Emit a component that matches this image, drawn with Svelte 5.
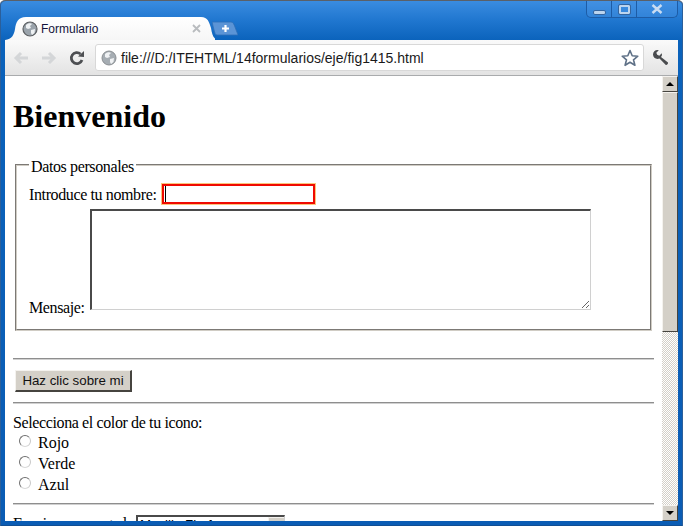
<script lang="ts">
	const radios = ['Rojo', 'Verde', 'Azul'];
</script>

<div class="window">
	<header class="tabstrip">
		<div class="tab">
			<svg class="tab-shape" width="210" height="24" viewBox="0 0 210 24">
				<defs>
					<linearGradient id="tabfill" x1="0" y1="0" x2="0" y2="1">
						<stop offset="0" stop-color="#ffffff" />
						<stop offset="1" stop-color="#f6f6f6" />
					</linearGradient>
				</defs>
				<path d="M0 24C7 23 9 19 10 13C11 6 13 1 21 1H196C203 1 204 6 206 12C207 18 208 22 212 24Z" fill="url(#tabfill)" />
			</svg>
			<svg class="globe" width="16" height="16" viewBox="0 0 16 16">
				<circle cx="8" cy="8" r="7" fill="#9aa3ab" stroke="#5c5f62" stroke-width="1.2" />
				<path d="M4 4C6 2 9 2 10 3L8 5L9 7L6 8L4 7ZM9 9L13 8L12.500 12L10 14L9 12Z" fill="#eef1f3" />
			</svg>
			<span class="tab-title">Formulario</span>
			<svg class="tab-close" width="9" height="9" viewBox="0 0 9 9">
				<path d="M1 1L8 8M8 1L1 8" stroke="#b9bcbf" stroke-width="1.800" />
			</svg>
		</div>
		<div class="newtab">
			<svg width="26" height="15" viewBox="0 0 26 15">
				<path d="M0 1H19C21 1 22 3 23 6L26 14H5C3 14 3 12 2 9Z" fill="#5b94d6" stroke="#2d6fb8" stroke-width="0.800" />
				<path d="M13.500 4V11M10 7.500H17" stroke="#ffffff" stroke-width="2.200" />
			</svg>
		</div>
		<div class="controls">
			<div class="ctl ctl-min"><span class="min-bar"></span></div>
			<div class="ctl ctl-max"><span class="max-box"></span></div>
			<div class="ctl ctl-close">
				<svg width="12" height="10" viewBox="0 0 12 10">
					<path d="M1.500 1L10.500 9M10.500 1L1.500 9" stroke="#c9dcf2" stroke-width="2.400" />
				</svg>
			</div>
		</div>
	</header>

	<nav class="toolbar">
		<svg class="tool back" width="16" height="14" viewBox="0 0 16 14">
			<path d="M15 7H4M8 2L3 7L8 12" fill="none" stroke="#d4d6d8" stroke-width="3" />
		</svg>
		<svg class="tool fwd" width="16" height="14" viewBox="0 0 16 14">
			<path d="M1 7H12M8 2L13 7L8 12" fill="none" stroke="#d4d6d8" stroke-width="3" />
		</svg>
		<svg class="tool reload" width="16" height="16" viewBox="0 0 16 16">
			<path d="M13 10A5.500 5.500 0 1 1 11.500 4" fill="none" stroke="#4d4f52" stroke-width="2.800" />
			<path d="M9 6.500L15 7V1Z" fill="#4d4f52" />
		</svg>
		<div class="omnibox">
			<svg class="globe" width="16" height="16" viewBox="0 0 16 16">
				<circle cx="8" cy="8" r="7" fill="#a6adb3" stroke="#8a8e92" stroke-width="1" />
				<path d="M4 4C6 2 9 2 10 3L8 5L9 7L6 8L4 7ZM9 9L13 8L12.500 12L10 14L9 12Z" fill="#f0f2f4" />
			</svg>
			<span class="url">file:///D:/ITEHTML/14formularios/eje/fig1415.html</span>
			<svg class="star" width="18" height="18" viewBox="0 0 18 18">
				<path d="M9 1.500L11.200 6.800L16.800 7.200L12.500 10.800L13.900 16.300L9 13.300L4.100 16.300L5.500 10.800L1.200 7.200L6.800 6.800Z" fill="#fff" stroke="#5f7187" stroke-width="1.600" stroke-linejoin="round" />
			</svg>
		</div>
		<svg class="wrench" width="17" height="17" viewBox="0 0 17 17">
			<path d="M1 5.500C1 3 3 1 5.500 1L6.800 1.300L4.300 3.800L5.200 5.800L7.300 6.700L9.700 4.200C10.300 6 9.800 7.200 9 8L16 13.500C16.500 14.500 15 16.500 13.800 16L7.500 9.500C4.500 10.700 1 9 1 5.500Z" fill="#4a4c4f" />
		</svg>
	</nav>

	<div class="viewport">
		<main class="page">
			<h1>Bienvenido</h1>
			<form>
				<fieldset>
					<legend>Datos personales</legend>
					<label for="nombre">Introduce tu nombre:</label>
					<input id="nombre" type="text" class="name-input" />
					<br />
					<label for="mensaje">Mensaje:</label>
					<textarea id="mensaje"></textarea>
				</fieldset>
				<hr class="hr-first" />
				<button type="button">Haz clic sobre mi</button>
				<hr class="hr-second" />
				<div class="radio-title">Selecciona el color de tu icono:</div>
				{#each radios as color}
					<div class="radio-row">
						<input type="radio" name="color" id={color} />
						<label for={color}>{color}</label>
					</div>
				{/each}
				<hr class="hr-last" />
				<div class="select-row">
					<label for="opcion">Escoja un navegador:</label>
					<div id="opcion" class="fake-select">
						<span>Mozilla Firefox</span>
						<span class="select-arrow"></span>
					</div>
				</div>
			</form>
		</main>
		<aside class="scrollbar">
			<div class="sb-btn"><span class="arrow-up"></span></div>
			<div class="sb-thumb"></div>
			<div class="sb-track"></div>
			<div class="sb-btn"><span class="arrow-down"></span></div>
		</aside>
	</div>
</div>

<style>
	:global(body) {
		margin: 0;
		overflow: hidden;
	}

	.window {
		width: 683px;
		height: 526px;
		box-sizing: border-box;
		display: flex;
		flex-direction: column;
		padding: 0 5px 5px 5px;
		overflow: hidden;
		border-radius: 5px 5px 0 0;
		border-top: 1px solid #5a6068;
		background: linear-gradient(#3a8ce0 0, #1f76cf 20px, #0a62bb 40px, #0a5cb4 100%);
		box-shadow: inset 1px 0 #2b5f9a, inset -1px 0 #2b5f9a, inset 0 -1px #124f93;
	}

	.tabstrip {
		height: 39px;
		display: flex;
		flex: none;
		align-items: flex-end;
		margin: 0 -5px;
		padding-left: 5px;
		position: relative;
	}

	.tab {
		position: relative;
		width: 205px;
		height: 23px;
		display: flex;
		align-items: center;
		padding: 0 0 0 17px;
		box-sizing: border-box;
		font: 12px "Liberation Sans", Arial, sans-serif;
		color: #14143c;
	}

	.tab-shape {
		position: absolute;
		left: 0;
		top: -1px;
	}

	.tab .globe,
	.tab-title,
	.tab-close {
		position: relative;
	}

	.tab-title {
		margin-left: 3px;
		width: 151px;
	}

	.newtab {
		height: 23px;
		margin-left: 2px;
		padding-top: 4px;
		box-sizing: border-box;
	}

	.controls {
		margin-left: auto;
		margin-right: 5px;
		align-self: flex-start;
		width: 92px;
		height: 17px;
		display: flex;
		box-sizing: border-box;
		border: 1px solid #1d5ca6;
		border-top: none;
		border-radius: 0 0 5px 5px;
		background: rgba(90, 160, 235, 0.25);
	}

	.ctl {
		display: flex;
		align-items: center;
		justify-content: center;
		border-right: 1px solid #1d5ca6;
		box-sizing: border-box;
	}

	.ctl-min {
		width: 25px;
	}

	.ctl-max {
		width: 25px;
	}

	.ctl-close {
		flex: 1;
		border-right: none;
	}

	.min-bar {
		width: 11px;
		height: 3px;
		margin-top: 6px;
		background: #bcd4ee;
		border: 1px solid #3465a0;
		border-radius: 2px;
	}

	.max-box {
		width: 7px;
		height: 5px;
		border: 2px solid #bcd4ee;
		outline: 1px solid #3465a0;
		border-radius: 1px;
	}

	.toolbar {
		height: 36px;
		flex: none;
		display: flex;
		align-items: center;
		box-sizing: border-box;
		background: linear-gradient(#fafafa, #e3e3e3);
		border-bottom: 1px solid #a9abad;
		position: relative;
	}

	.tool,
	.wrench {
		flex: none;
	}

	.back {
		margin-left: 8px;
	}

	.fwd {
		margin-left: 12px;
	}

	.reload {
		margin-left: 12px;
	}

	.omnibox {
		width: 549px;
		height: 27px;
		margin-left: 10px;
		box-sizing: border-box;
		background: #fff;
		border: 1px solid #d8d8d8;
		border-radius: 3px;
		display: flex;
		align-items: center;
		padding: 0 4px 0 5px;
		font: 14px "Liberation Sans", Arial, sans-serif;
		color: #1a1a1a;
	}

	.url {
		margin-left: 4px;
		flex: 1;
	}

	.wrench {
		margin-left: 8px;
	}

	.viewport {
		flex: 1;
		min-height: 0;
		display: flex;
		background: #fff;
		overflow: hidden;
	}

	.page {
		flex: 1;
		min-width: 0;
		padding: 0 8px;
		font: 16px "Liberation Serif", "Times New Roman", serif;
		letter-spacing: -0.38px;
		color: #000;
		overflow: hidden;
	}

	h1 {
		margin: 22px 0 19px;
		font-size: 32px;
		font-weight: bold;
		letter-spacing: 0;
	}

	fieldset {
		margin: 0 2px;
		padding: 8px 12px 12px 12px;
		border: 2px groove #d0ccc4;
		display: block;
		min-width: 0;
	}

	legend {
		padding: 4px 2px 0;
	}

	.name-input {
		width: 153px;
		height: 20px;
		box-sizing: border-box;
		margin: 0 0 0 2px;
		padding: 1px 2px;
		border: 2px solid #f00a00;
		box-shadow: 0 0 0 1px #fbc47c;
		background: linear-gradient(#000, #000) 1px 0 / 1px 16px no-repeat, #fff;
		border-radius: 0;
		vertical-align: 1px;
		outline: none;
	}

	textarea {
		width: 501px;
		height: 101px;
		box-sizing: border-box;
		margin: 5px 0 0 2px;
		padding: 2px;
		border-style: solid;
		border-width: 2px 1px 1px 2px;
		border-color: #4a4a4a #d0d0d0 #d0d0d0 #4a4a4a;
		background: #fff;
		vertical-align: 3px;
		outline: none;
	}

	hr {
		margin: 8px 0;
		border: none;
		border-top: 1px solid #8e8e8e;
		border-bottom: 1px solid #d0d0d0;
		height: 0;
	}

	.hr-first {
		margin-top: 27px;
		margin-bottom: 10px;
	}

	.hr-second {
		margin-bottom: 10px;
	}

	.hr-last {
		margin-top: 7px;
	}

	button {
		display: block;
		margin: 0 2px 10px;
		width: 117px;
		height: 22px;
		padding: 0;
		box-sizing: border-box;
		background: #d4d0c8;
		border-style: solid;
		border-width: 1px 2px 2px 1px;
		border-color: #f4f2ee #46443f #46443f #f4f2ee;
		font: 13.300px "Liberation Sans", Arial, sans-serif;
		letter-spacing: 0;
		color: #111;
	}

	.radio-title {
		height: 19px;
	}

	.radio-row {
		height: 21px;
		display: flex;
		align-items: flex-start;
	}

	.radio-row label {
		margin-left: 7px;
		line-height: 20px;
		letter-spacing: 0;
	}

	input[type='radio'] {
		appearance: none;
		width: 12px;
		height: 12px;
		margin: 2px 0 0 6px;
		border-radius: 50%;
		box-sizing: border-box;
		border: 1px solid #6f6f6f;
		border-right-color: #c9c9c9;
		border-bottom-color: #d8d8d8;
		background: #fff;
	}

	.select-row {
		display: flex;
		align-items: flex-start;
		margin-top: 10px;
	}

	.select-row label {
		width: 123px;
		white-space: nowrap;
	}

	.fake-select {
		width: 149px;
		height: 21px;
		box-sizing: border-box;
		border-style: solid;
		border-width: 2px 1px 1px 2px;
		border-color: #4a4a4a #d0d0d0 #d0d0d0 #4a4a4a;
		display: flex;
		padding-left: 2px;
		font: 13.300px "Liberation Sans", Arial, sans-serif;
		letter-spacing: 0;
	}

	.fake-select span:first-child {
		flex: 1;
	}

	.select-arrow {
		width: 15px;
		background: #d4d0c8;
		border-left: 1px solid #f4f2ee;
		border-top: 1px solid #f4f2ee;
	}

	.scrollbar {
		width: 16px;
		flex: none;
		display: flex;
		flex-direction: column;
		background-color: #fff;
	}

	.sb-btn {
		height: 16px;
		flex: none;
		box-sizing: border-box;
		background: #d4d0c8;
		border-style: solid;
		border-width: 1px;
		border-color: #f4f2ee #46443f #46443f #f4f2ee;
		display: flex;
		align-items: center;
		justify-content: center;
	}

	.arrow-up {
		width: 0;
		height: 0;
		border: 4px solid transparent;
		border-top: none;
		border-bottom: 4px solid #000;
	}

	.arrow-down {
		width: 0;
		height: 0;
		border: 4px solid transparent;
		border-bottom: none;
		border-top: 4px solid #000;
	}

	.sb-thumb {
		height: 240px;
		flex: none;
		box-sizing: border-box;
		background: #d4d0c8;
		border-style: solid;
		border-width: 1px;
		border-color: #f4f2ee #46443f #46443f #f4f2ee;
	}

	.sb-track {
		flex: 1;
		background-color: #fff;
		background-image: repeating-conic-gradient(#d4d0c8 0 25%, #fff 0 50%);
		background-size: 2px 2px;
	}
</style>
